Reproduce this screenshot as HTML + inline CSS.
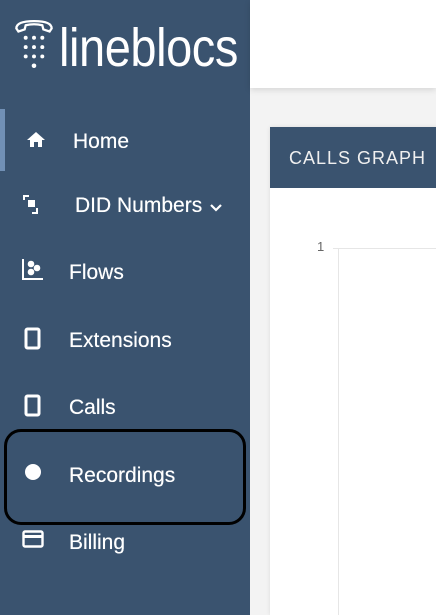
<!DOCTYPE html>
<html style="overflow:hidden;height:615px"><head><style>
body{margin:0;width:436px;height:615px;overflow:hidden;background:#f3f3f3;font-family:"Liberation Sans",sans-serif;position:relative}
.sb{position:absolute;left:0;top:0;width:250px;height:615px;background:#3a536f;color:#fff}
.top{position:absolute;left:250px;top:0;width:186px;height:88px;background:#fff;box-shadow:0 2px 6px rgba(0,0,0,.12)}
.card{position:absolute;left:270px;top:127px;width:180px;height:488px;background:#fff;box-shadow:0 0 4px rgba(0,0,0,.1)}
.ch{height:61px;background:#3a536f;color:#f0f0f0;font-size:18px;letter-spacing:1px;line-height:63px;padding-left:19px}
.item{position:absolute;left:0;font-size:21px;line-height:22px;text-shadow:0 0 .4px #fff}
.logo{position:absolute;left:59px;top:17px;font-size:54px;font-weight:300;letter-spacing:-.5px;transform:scaleX(.87);transform-origin:left;color:#fff}
</style></head><body>
<div class="sb">
<svg style="position:absolute;left:11px;top:18px" width="46" height="54" viewBox="0 0 42 52">
<path d="M4 10 Q4 3 21 3 Q38 3 38 10 L36 13 L30 11 L29 7 Q21 5 13 7 L12 11 L6 13 Z" fill="none" stroke="#fff" stroke-width="2.2"/>
<g fill="#fff"><circle cx="13" cy="19" r="1.9"/><circle cx="21" cy="19" r="1.9"/><circle cx="29" cy="19" r="1.9"/>
<circle cx="13" cy="28" r="1.9"/><circle cx="21" cy="28" r="1.9"/><circle cx="29" cy="28" r="1.9"/>
<circle cx="13" cy="37" r="1.9"/><circle cx="21" cy="37" r="1.9"/><circle cx="29" cy="37" r="1.9"/><circle cx="21" cy="46" r="2.2"/></g></svg>
<div class="logo">lineblocs</div>
<div style="position:absolute;left:0;top:109px;width:5px;height:62px;background:#7190b5"></div>
<svg class="item" style="left:26px;top:131px" width="20" height="18" viewBox="0 0 20 18"><path d="M10 1 L1 9 H4 V16 H8 V11 H12 V16 H16 V9 H19 Z" fill="#fff"/></svg>
<div class="item" style="left:73px;top:131px">Home</div>
<svg class="item" style="left:22px;top:194px" width="22" height="22" viewBox="0 0 22 22"><path d="M1 1H7V3H3V6H1Z M6 6H13V13H6Z M14 14V18H10V20H16V14Z" fill="#fff"/></svg>
<div class="item" style="left:75px;top:195px">DID Numbers</div>
<svg class="item" style="left:210px;top:204px" width="12" height="8" viewBox="0 0 12 8"><path d="M1 1L6 6L11 1" stroke="#fff" stroke-width="2.2" fill="none"/></svg>
<svg class="item" style="left:22px;top:259px" width="22" height="22" viewBox="0 0 22 22"><path d="M1 0V20H21" stroke="#fff" stroke-width="2" fill="none"/><circle cx="9" cy="5" r="3.3" fill="#fff"/><circle cx="9" cy="13" r="3.3" fill="#fff"/><circle cx="15" cy="9" r="3.3" fill="#fff"/></svg>
<div class="item" style="left:69px;top:262px">Flows</div>
<svg class="item" style="left:24px;top:327px" width="18" height="24" viewBox="0 0 18 24"><rect x="2" y="2" width="13" height="19" rx="1.5" stroke="#fff" stroke-width="3" fill="none"/></svg>
<div class="item" style="left:69px;top:330px">Extensions</div>
<svg class="item" style="left:24px;top:394px" width="18" height="24" viewBox="0 0 18 24"><rect x="2" y="2" width="13" height="19" rx="1.5" stroke="#fff" stroke-width="3" fill="none"/></svg>
<div class="item" style="left:69px;top:397px">Calls</div>
<div style="position:absolute;left:25px;top:464px;width:16px;height:16px;border-radius:50%;background:#fff"></div>
<div class="item" style="left:69px;top:465px">Recordings</div>
<div style="position:absolute;left:4px;top:429px;width:236px;height:90px;border:3px solid #000;border-radius:17px"></div>
<svg class="item" style="left:22px;top:530px" width="22" height="18" viewBox="0 0 22 18"><rect x="1.5" y="1.5" width="19" height="15" rx="1.5" stroke="#fff" stroke-width="2.4" fill="none"/><rect x="2" y="5" width="18" height="3" fill="#fff"/></svg>
<div class="item" style="left:69px;top:532px">Billing</div>
</div>
<div class="top"></div>
<div class="card"><div class="ch">CALLS GRAPH</div>
<div style="position:absolute;left:47px;top:112px;font-size:13px;color:#666">1</div>
<div style="position:absolute;left:63px;top:121px;width:120px;height:1px;background:#e6e6e6"></div>
<div style="position:absolute;left:68px;top:121px;width:1px;height:380px;background:#e6e6e6"></div>
</div>
</body></html>
